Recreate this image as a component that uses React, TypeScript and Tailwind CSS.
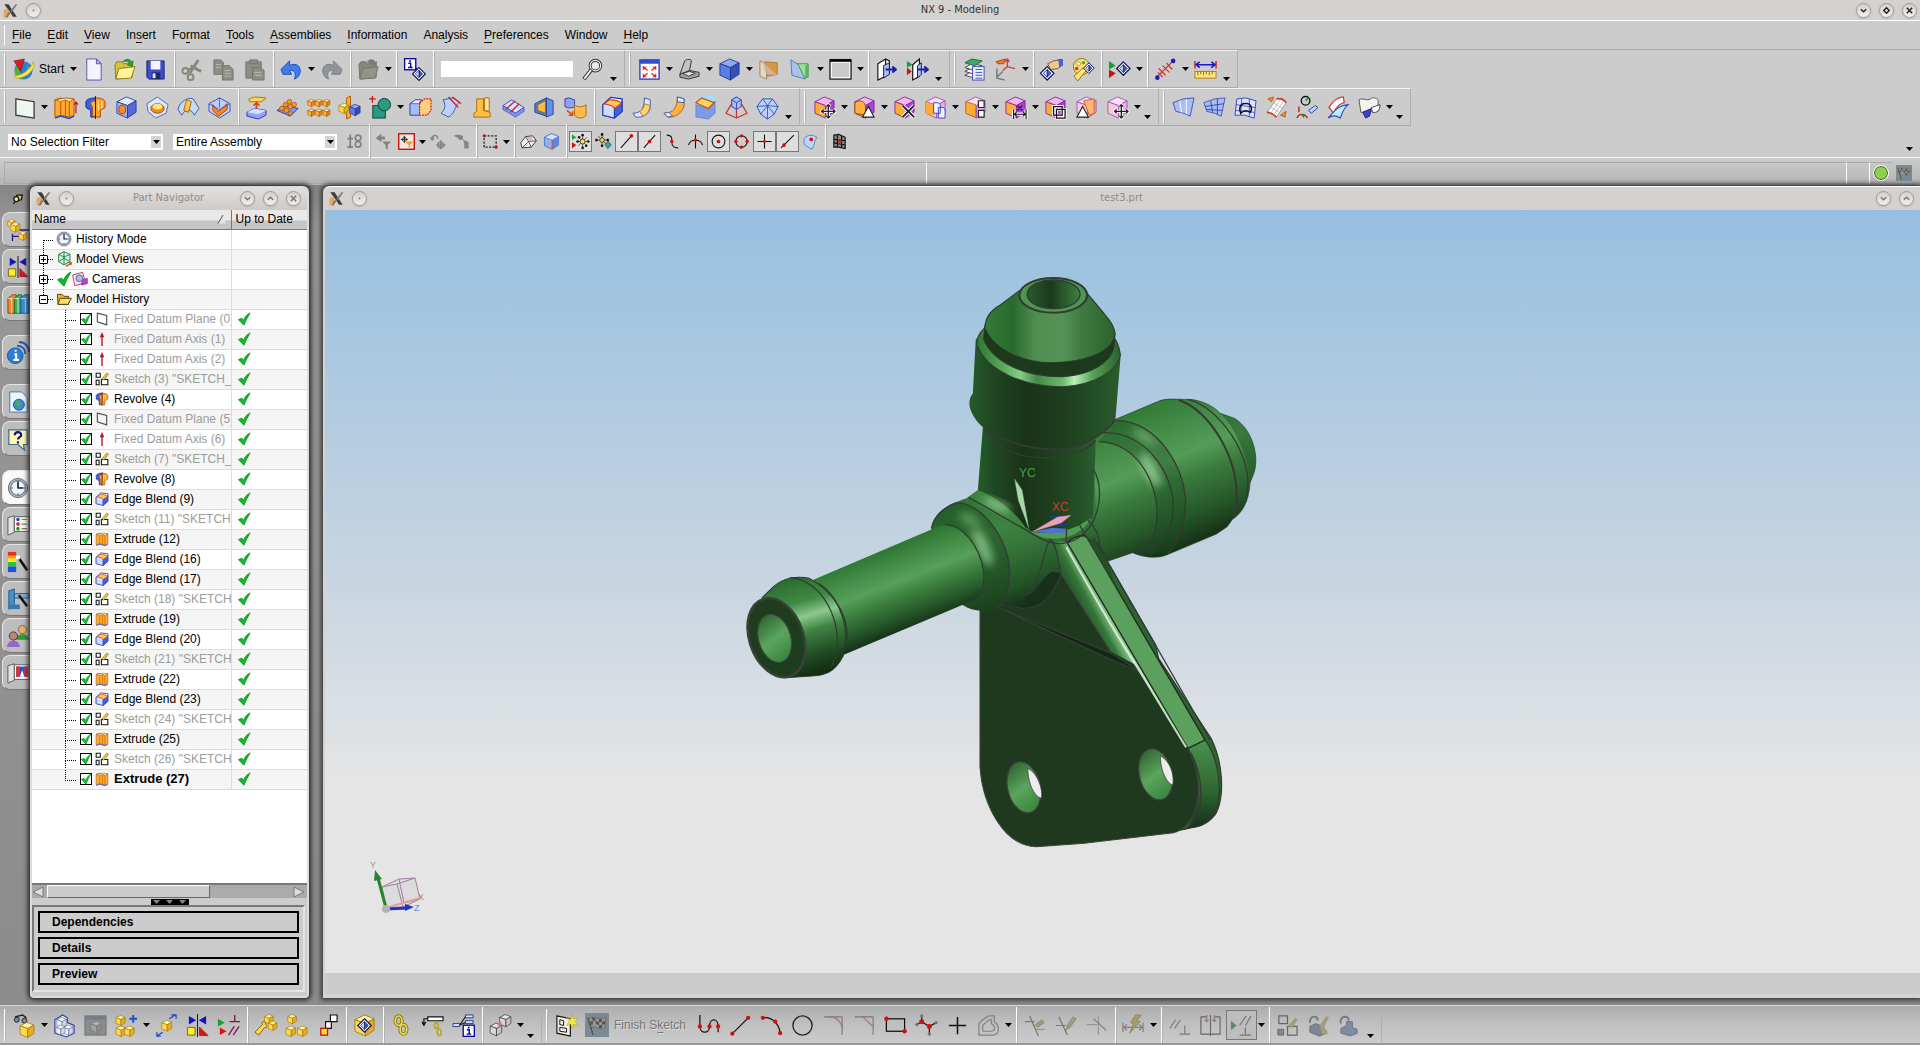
import React from "react";

type Node = React.ReactNode;

const PAL: Record<string, string[]> = {
  blue: ["#e3eaff", "#9fb2f6", "#5569d8", "#2a3a9c"],
  solid: ["#8fa8f4", "#5c7ce6", "#3450b8", "#22348c"],
  orange: ["#ffe7a8", "#ffb53c", "#e88512", "#a34f00"],
  yellow: ["#fff3a8", "#ffd84e", "#e5ac1c", "#9c7410"],
  mag: ["#f1b8ee", "#ffac33", "#a445d6", "#8a1fa0"],
  pink: ["#f8e0f8", "#f4ccd8", "#e0b0ea", "#a54bb8"],
  white: ["#ffffff", "#f1f3fa", "#d3d8ea", "#5a648c"],
  grey: ["#b3b3ad", "#a3a39c", "#8f8f88", "#78786f"],
  wire: ["#e6e6e6", "#d8d8d8", "#c4c4c4", "#333333"],
};

function Cube({ k = "blue", x = 0, y = 0, s = 1 }: { k?: string; x?: number; y?: number; s?: number }) {
  const p = PAL[k];
  return (
    <g transform={`translate(${x} ${y}) scale(${s})`} stroke={p[3]} strokeWidth={0.9 / Math.sqrt(s)} strokeLinejoin="round">
      <path d="M2 6 12 1 22 5 13 10Z" fill={p[0]} />
      <path d="M2 6 13 10V23L2 18Z" fill={p[1]} />
      <path d="M13 10 22 5V17L13 23Z" fill={p[2]} />
    </g>
  );
}

function L({ d, c = "#111", w = 1.2, f = "none" }: { d: string; c?: string; w?: number; f?: string }) {
  return <path d={d} stroke={c} strokeWidth={w} fill={f} strokeLinejoin="round" />;
}

function Dots({ at, c = "#d01010", r = 1.8 }: { at: number[][]; c?: string; r?: number }) {
  return <>{at.map(([x, y]) => <circle key={`${x}-${y}`} cx={x} cy={y} r={r} fill={c} />)}</>;
}

const arrows = "M16 9V23M9 16H23M14 11 16 9 18 11M14 21 16 23 18 21M11 14 9 16 11 18M21 14 23 16 21 18";
const moveMark = <><L d={arrows} c="#fff" w={3.4} /><L d={arrows} c="#222" w={1.4} /></>;
const mirror = (
  <>
    <path d="M3 2 10.500 6.500 3 11ZM21 2 13.500 6.500 21 11Z" fill="#1414b8" />
    <L d="M12 0V24" w={1} />
    <path d="M1.500 14H9.500V22H1.500Z" fill="#ffee2e" stroke="#7a6500" />
    <path d="M14 13.500V22.500H23Z" fill="#d81616" stroke="#7a0000" strokeWidth=".6" />
  </>
);
const diamond = (x: number, y: number) => (
  <g transform={`translate(${x} ${y})`}>
    <path d="M7 0 14 7 7 14 0 7Z" fill="#fff" stroke="#101060" strokeWidth="1.300" />
    <path d="M7 3 11 7 7 11Z" fill="#2e62c8" stroke="#101060" strokeWidth=".8" />
    <path d="M7 3 3 7 7 11Z" fill="#cfe0ff" stroke="#101060" strokeWidth=".8" />
  </g>
);
const infoBox = (x: number, y: number) => (
  <g transform={`translate(${x} ${y})`}>
    <rect x=".7" y=".7" width="11.600" height="11.600" fill="#fff" stroke="#0a0a96" strokeWidth="1.400" />
    <path d="M4.500 5.500H7V9.500M4.300 10H9" stroke="#0a0a96" strokeWidth="1.500" fill="none" />
    <rect x="5.500" y="2.300" width="1.900" height="1.700" fill="#0a0a96" />
  </g>
);
const extrude = (
  <>
    <path d="M2 4 8 2 13 4 22 3V20L17 22 8 20 2 22Z" fill="#ffab33" stroke="#a85500" />
    <path d="M2 4 8 6 13 4 17 6 22 3 13 2Z" fill="#ffe09a" stroke="#a85500" strokeWidth=".8" />
    <L d="M8 6V20M17 6V22M13 5V21" c="#c06400" w={1.2} />
    <L d="M2 23 8 21 17 23.500 22 21" c="#2b3fd0" w={1.4} />
  </>
);
const revolve = (
  <>
    <path d="M12 2C7 2 3 3 2 6V12L7 15V22H12Z" fill="#3d5fe0" stroke="#1b2f92" />
    <path d="M12 2C17 2 21 3 22 6V12L17 15V22H12Z" fill="#ff9d22" stroke="#a54a00" />
    <path d="M12 5C9 5 7 6 7 8L9 12V21H12Z" fill="#ffb040" stroke="#a54a00" strokeWidth=".8" />
    <L d="M12 0V24" w={1} c="#222" />
    <L d="M15 5V15M18.500 5V13" c="#ffe0a0" w={1.4} />
  </>
);
const blend = (
  <>
    <path d="M2 9 10 1.500 22 3 22 16 14 23 2 20Z" fill="#fff" stroke="#2336b8" strokeWidth="1.400" />
    <path d="M2 9C2 7 14 8 14 12V23L2 20Z" fill="#cfdcff" stroke="#2336b8" />
    <path d="M14 12 22 6V16L14 23Z" fill="#3f5fe4" stroke="#2336b8" />
    <path d="M3 8 9 4C15 4 20 5 21 8L14 13C12 9 6 9 3 8Z" fill="#ffc566" stroke="#d0400c" strokeWidth="1.200" />
  </>
);
const sketchMini = (
  <>
    <path d="M2 2H9V9H2ZM2 14H7V22H2ZM11 13H22V22H11Z" fill="#fff" stroke="#111" strokeWidth="1.800" />
    <path d="M12 12 20 2 23 4 15 14Z" fill="#ffc83c" stroke="#6a4800" />
  </>
);
const clock = (
  <>
    <circle cx="12" cy="12" r="10.500" fill="#aeb6c4" stroke="#5c6472" />
    <circle cx="12" cy="12" r="8" fill="#eef4fb" stroke="#5c6472" />
    <L d="M12 5V12H17.500" c="#15213a" w={1.8} />
    <Dots at={[[12, 5.5], [12, 18.5], [5.5, 12], [18.5, 12]]} c="#4f5a6a" r={0.9} />
  </>
);
const flag = (
  <>
    <rect x="0" y="0" width="24" height="24" fill="#7b8b95" />
    <path d="M3 6C8 2 14 8 21 4L20 15C14 18 11 12 6 15Z" fill="#97968e" stroke="#5a625e" strokeWidth=".7" />
    <path d="M7 4.500 10 5 10.500 8 7.500 7.500ZM14 6 17 6 17 9 14 9ZM10.500 8 14 9 14 12 11 11ZM17 9 20 8 20 11 17 12ZM5 9 7.500 7.500 8 11 6 12ZM14 12 17 12 17 15 14 15Z" fill="#55564e" />
    <L d="M3 5 8 22" c="#55564e" w={1.5} />
  </>
);

const ICONS: Record<string, Node> = {
  New: (<><path d="M5 1H15L20 6V23H5Z" fill="#f3f4ff" stroke="#5058b0" /><path d="M15 1V6H20Z" fill="#b8bdf0" stroke="#5058b0" /></>),
  Open: (<><path d="M2 7 4 4H9L11 6H20V20L3 22Z" fill="#d9c33a" stroke="#8b7a12" /><path d="M6 11 23 9 19 21 3 22Z" fill="#fff29a" stroke="#8b7a12" /><path d="M10 4C14 0 18 1 19 4L21 3 20 9 15 7 17 5C15 3 13 3 10 4Z" fill="#2fa02c" stroke="#156014" strokeWidth=".6" /></>),
  Save: (<><path d="M3 3H21V22H5L3 20Z" fill="#3c4ed0" stroke="#1a2478" /><rect x="7" y="3" width="10" height="9" fill="#f4f6ff" /><rect x="8" y="15" width="9" height="7" fill="#202a60" /><rect x="9" y="16" width="3" height="5" fill="#dfe4ff" /></>),
  Cut: (<g stroke="#86867e" fill="none" strokeWidth="2"><path d="M18 2 9 16M10 8 21 14" strokeWidth="3" /><circle cx="4.500" cy="13.500" r="3" /><circle cx="10" cy="20" r="3" /><path d="M7 12 16 10" /></g>),
  Copy: (<g fill="#8d8d86" stroke="#75756e"><path d="M2 2H9L12 5V17H2Z" /><path d="M11 8H18L22 12V23H11Z" /><path d="M13 13H19M13 16H20M13 19H20M4 7H9M4 10H9" stroke="#bdbdb8" /></g>),
  Paste: (<g fill="#8d8d86" stroke="#75756e"><path d="M3 4H19V21H3Z" /><path d="M7 2H15V6H7Z" /><path d="M10 10H18L22 13V23H10Z" /><path d="M12 15H19M12 18H20" stroke="#bdbdb8" /></g>),
  Undo: (<path d="M1 12 10 3V8C17 4 22 9 21 15 20 19 18 21 15 22 17 17 16 12 10 13L12 17 3 17Z" fill="#3d7df0" stroke="#1d4fb8" />),
  Redo: (<path d="M23 12 14 3V8C7 4 2 9 3 15 4 19 6 21 9 22 7 17 8 12 14 13L12 17 21 17Z" fill="#8f949a" stroke="#7a7f86" />),
  "Feature Clipboard": (<><path d="M2 7 4 4H9L11 6H20V20L3 22Z" fill="#86867a" stroke="#74746a" /><path d="M6 11 22 9 19 21 3 22Z" fill="#93938a" stroke="#74746a" /><path d="M10 4C14 0 18 1 19 4L21 3 20 9 15 7Z" fill="#7c7c72" /></>),
  "Object Information": (<>{infoBox(1, 0)}<path d="M14 10V15H11" stroke="#0a0a96" fill="none" /><g transform="translate(10 10) scale(.95)">{diamond(0, 0)}</g></>),
  "Command Finder": (<><circle cx="15" cy="8" r="5.500" fill="#e8eaee" stroke="#333" strokeWidth="3.200" /><circle cx="15" cy="8" r="5.500" fill="none" stroke="#f4f4f4" strokeWidth="1.200" /><L d="M11 12 3 22" c="#333" w={4} /><L d="M10.500 12.500 3.500 21.500" c="#fff" w={1.8} /></>),
  Fit: (<><rect x="2" y="2" width="20" height="20" fill="#fff" stroke="#2440b8" strokeWidth="1.400" /><path d="M2 2H22V6H2Z" fill="#2d4fd0" /><path d="M5 9H9L5 13ZM19 9H15L19 13ZM5 20H9L5 16ZM19 20H15L19 16Z" fill="#e02814" /><L d="M5 9 10 13M19 9 14 13M5 20 10 16M19 20 14 16" c="#e02814" w={1.4} /></>),
  "Edit Section": (<g stroke="#333" strokeWidth="1"><path d="M2 17 12 13 22 15 22 19 11 22 2 20Z" fill="#a3a3a3" /><path d="M2 17 7 3C9 1 14 1 14 3L12 13Z" fill="#c2c2c2" /><path d="M5 16 12 14 18 16 11 19Z" fill="#e4e4e4" /></g>),
  Shaded: <Cube k="solid" />,
  "Face Analysis": (<><path d="M2 3 9 6V22L2 19Z" fill="#e8d8be" stroke="#988668" /><path d="M7 4 20 5V17L10 19Z" fill="#dd9644" stroke="#b07a3a" /><path d="M4 3 20 18 8 17Z" fill="#c4c0ba" opacity=".7" /></>),
  "Clip Section": (<><path d="M2 2 10 7 17 22 3 18Z" fill="#a8c2ee" stroke="#5a78b8" /><path d="M9 6H20V20H16Z" fill="#a0dca0" stroke="#4a9a4a" /><path d="M17 8 20 6V20L17 22Z" fill="#54b854" /></>),
  Background: (<><rect x="1" y="2" width="22" height="20" fill="#fff" stroke="#222" strokeWidth="1.400" /><rect x="3" y="5" width="18" height="15" fill="#c9c9c9" /><rect x="1" y="1" width="22" height="3" fill="#050505" /></>),
  "Show and Hide": (<><path d="M3 6 11 1V19L3 23ZM11 1 15 3V17" fill="#fff" stroke="#111" strokeWidth="1.200" /><path d="M9 8 15 5V17L9 21Z" fill="#a8c0f0" stroke="#123" /><L d="M11 12H22M18 9 22 12 18 15" c="#1a1ac0" w={2} /></>),
  "Immediate Hide": (<><path d="M1 3 7 7 1 10Z" fill="#18a030" /><path d="M1 10 6 14 1 18Z" fill="#d01010" /><path d="M7 7 14 1V19L7 23Z" fill="#fff" stroke="#111" strokeWidth="1.200" /><path d="M12 8 16 5V17L12 21Z" fill="#a8c0f0" stroke="#123" /><L d="M12 12H23M19 9 23 12 19 15" c="#1a1ac0" w={2} /></>),
  "Layer Settings": (<><g fill="#f4f4f4" stroke="#444"><path d="M2 18 9 14 20 16 12 21Z" /><path d="M2 14 9 10 20 12 12 17Z" /><path d="M2 10 9 6 20 8 12 13Z" /></g><path d="M2 5 9 1 20 3 12 8Z" fill="#3fa86a" stroke="#1e6a40" /><rect x="10" y="9" width="12" height="14" fill="#eef1ff" stroke="#3a4ab8" /><L d="M13 12H20M13 15H20M13 18H20M13 21H20" c="#3a4ab8" w={1} /></>),
  "WCS Orient": (<><path d="M2 4 12 1 10 6 4 6Z" fill="#f07a28" stroke="#a44a08" /><L d="M14 2V9L22 11M14 9 9 13M12 4 14 1 16 4" c="#c84040" w={1.4} /><L d="M3 11V21L11 23M3 20 9 14" c="#777" w={1.5} /></>),
  "Feature Properties": (<><path d="M8 6 14 3 20 2 23 6 19 11 11 12Z" fill="#f0c890" stroke="#7a5a2a" /><path d="M19 1H24V8L20 10Z" fill="#4a5fd0" /><g transform="translate(0 9)">{diamond(0.5, 0)}</g></>),
  "Edit Display": (<><circle cx="11" cy="9" r="8.500" fill="#ffe466" stroke="#907010" /><circle cx="8" cy="6" r="2" fill="#fff" stroke="#7a6010" strokeWidth=".6" /><circle cx="13" cy="5" r="1.800" fill="#38b060" /><circle cx="6" cy="11" r="1.800" fill="#d03030" /><path d="M3 19 13 10 16 13 7 24Z" fill="#ffe27a" stroke="#907010" /><g transform="translate(13 5) scale(.8)">{diamond(0, 0)}</g></>),
  "Assign Feature": (<><path d="M1 3 8 8 1 12Z" fill="#18a030" /><path d="M1 12 8 16 1 21Z" fill="#d01010" /><g transform="translate(9 4)">{diamond(0, 0)}</g></>),
  "Simple Distance": (<><L d="M3 20 20 3M5 11 12 18M9 8 16 15M13 5 19 12M4 15 9 20" c="#d03030" w={1.3} /><Dots at={[[3.5, 20.5], [20, 3]]} c="#1a1ac8" r={2.4} /></>),
  "Measure Distance": (<><L d="M1 3V11M23 3V11" c="#d02020" w={1.5} /><L d="M2 7H22M6 4 2 7 6 10M18 4 22 7 18 10" c="#1a1ac8" w={1.6} /><rect x="1" y="14" width="22" height="7" fill="#ffe680" stroke="#a88410" /><L d="M4 14V18M7 14V17M10 14V18M13 14V17M16 14V18M19 14V17" c="#8a6a10" w={1} /></>),

  Sketch: <path d="M3 3 22 6V23L3 20Z" fill="#eef8f0" stroke="#333" strokeWidth="1.300" />,
  Extrude: <>{extrude}<L d="M24 7V18M22 9 24 6 26 9" c="#d01010" w={1.2} /></>,
  Revolve: revolve,
  Hole: (<><Cube /><ellipse cx="7.500" cy="14" rx="3.500" ry="4.500" fill="#ff8a1e" stroke="#b03a00" /></>),
  Emboss: (<><path d="M1 8 12 1 23 9 21 18 10 23 2 16Z" fill="#dbe7fd" stroke="#4a68c8" /><ellipse cx="12" cy="13" rx="7" ry="5" fill="#f28a18" stroke="#a45200" /><ellipse cx="12" cy="11" rx="5" ry="3" fill="#ffe08a" /></>),
  Rib: (<><path d="M1 14C3 5 12 1 17 3L23 13 18 20C16 14 9 12 5 20Z" fill="#c6daf4" stroke="#3a5aa8" /><path d="M10 4 15 6 12 17 7 15Z" fill="#ffc44a" stroke="#a46a10" /></>),
  Shell: (<><path d="M1 8 12 2 23 8V16L12 23 1 16Z" fill="#bcd0fa" stroke="#3050c0" /><path d="M5 9 11 16 20 8V14L11 21 5 15Z" fill="#ff8622" stroke="#b24400" /><L d="M12 2V12M1 8 12 14 23 8" c="#3050c0" w={0.8} /></>),
  Thicken: (<><path d="M4 3 10 1 22 2 17 6H5Z" fill="#ffd458" stroke="#a8760e" /><L d="M12 16V7M9 10 12 7 15 10" c="#e04a10" w={1.8} /><path d="M2 17 10 13 22 15V20L14 24 2 21Z" fill="#8ea4f4" stroke="#2a3fb0" /><path d="M2 17 10 13 22 15 14 19Z" fill="#d4deff" /></>),
  "Pattern Feature": (<><path d="M1 15 9 10 23 13 15 21Z" fill="#7d96f0" stroke="#2a3fb0" /><g fill="#f49a28" stroke="#a24c00" strokeWidth=".7"><circle cx="6" cy="13" r="2.400" /><circle cx="10" cy="9" r="2.400" /><circle cx="14" cy="6" r="2.400" /><circle cx="11" cy="15" r="2.400" /><circle cx="15" cy="11" r="2.400" /><circle cx="19" cy="9" r="2.400" /><circle cx="15" cy="18" r="2" /></g></>),
  "Pattern Geometry": (<>{[0, 8, 16].map((x) => [3, 13].map((y) => <Cube key={`${x}${y}`} k="orange" x={x} y={y} s={0.36} />))}</>),
  "Mirror Feature": (<><path d="M9 2 13 0V22L9 24Z" fill="#ffb030" stroke="#a85a00" /><Cube k="yellow" x={0} y={7} s={0.5} /><Cube k="solid" x={11} y={8} s={0.55} /></>),
  Unite: (<><rect x="4" y="10" width="13" height="13" fill="#2a9a86" stroke="#0b3f38" /><circle cx="16" cy="9" r="6.500" fill="#2a9a86" stroke="#0b3f38" /><L d="M0 3H7M3.500 0V7" c="#d01010" w={1.3} /></>),
  "Trim Body": (<><path d="M1 8 7 4H13L11 8V20H1Z" fill="#a9bcf8" stroke="#2a3fb0" /><path d="M1 8 7 4H13L10 8Z" fill="#e6edff" stroke="#2a3fb0" strokeWidth=".7" /><path d="M11 8 16 3H23V15L19 20H11Z" fill="#fbcf7c" stroke="#d02020" strokeWidth="1.300" strokeDasharray="2 1" /></>),
  "Split Body": (<><path d="M3 4 13 2 20 6C15 11 16 18 9 22L1 18C6 14 6 8 3 4Z" fill="#bcd0fa" stroke="#3a5aa8" /><L d="M9 1 19 12M13 1 22 8" c="#d02020" w={1.4} /></>),
  "Offset Region": (<><path d="M6 3H13V15L20 17V22H3V18L6 16Z" fill="#ffbf44" stroke="#b06a0a" /><path d="M14 2H19V16L14 15Z" fill="#ffe5a2" stroke="#b06a0a" /></>),
  "Trim Sheet": (<><path d="M1 10 10 4 23 12 14 18Z" fill="#d4deff" stroke="#3a50b8" /><path d="M1 10V14L14 22 23 16V12L14 18Z" fill="#8095ec" stroke="#3a50b8" strokeWidth=".8" /><L d="M4 14 14 5M9 17 18 8" c="#d02020" w={1.4} /></>),
  "Delete Body": (<><path d="M2 8 14 2V21L2 17Z" fill="#4878d4" stroke="#23459c" /><path d="M5 9 13 5V18L5 15Z" fill="#ffbd44" stroke="#a86a0a" /><path d="M14 2 21 5V19L14 22Z" fill="#6890e0" stroke="#23459c" /></>),
  "Scale Body": (<><path d="M1 3 5 2 11 4V11C8 13 4 13 1 11Z" fill="#8ea4f4" stroke="#2a3fb0" /><path d="M11 9C14 12 20 12 23 9V20C20 24 14 24 11 20Z" fill="#ffbb50" stroke="#b06a0a" /><L d="M3 15 9 20M9 16V20H5" c="#e04a10" w={1.6} /></>),

  "Edge Blend": blend,
  "Face Blend": (<><path d="M13 2 19 4V13C17 19 11 23 4 22L1 18C9 18 13 13 13 2Z" fill="#e2ecff" stroke="#3a5ac0" /><path d="M8 16C11 14 13 12 13 8L19 10C18 16 15 20 11 21Z" fill="#ffd27a" stroke="#c07a1a" /></>),
  "Soft Blend": (<><path d="M15 1 22 3V10C20 18 12 23 5 22L1 18C11 18 15 12 15 1Z" fill="#ffb23c" stroke="#b06208" /><path d="M15 1 22 3V7L15 6ZM1 18 5 22 10 21 6 17Z" fill="#e2ecff" stroke="#3a5ac0" /></>),
  Chamfer: (<><path d="M8 0H23V20H2V9Z" fill="#a8dcf4" /><path d="M2 9 14 13 22 5V18L15 24 2 22Z" fill="#7f9be8" stroke="#506ac0" strokeWidth=".6" /><path d="M2 7 8 2 21 7 15 13Z" fill="#ffd65c" stroke="#c04a10" strokeWidth="1.200" /></>),
  Draft: (<><path d="M7 4 12 1 17 4V11L12 14 7 11Z" fill="#a9bcf8" stroke="#2a3fb0" /><L d="M7 8 1 18 12 23 23 18 17 8M12 14V23" c="#c83420" w={1.3} /><L d="M7 4 12 7 17 4M12 7V14" c="#2a3fb0" w={0.9} /></>),
  "Facet Body": (<><path d="M7 3 17 3 23 11 19 19 12 24 5 19 1 11Z" fill="#bdd0fb" stroke="#3050b0" /><L d="M7 3 12 10 17 3M1 11 12 10 23 11M12 10V24M5 19 12 10 19 19" c="#3050b0" w={0.9} /></>),

  "Move Face": <><Cube k="mag" />{moveMark}</>,
  "Pull Face": (<><Cube k="mag" /><path d="M2 7C8 3 13 6 13 12V20L2 18Z" fill="#ffb33a" stroke="#9a5200" /><path d="M16 11 22 22H10Z" fill="#fff" stroke="#222" strokeWidth="1.200" /></>),
  "Delete Face": <><Cube k="mag" /><L d="M10 10 22 22M22 10 10 22" c="#fff" w={4} /><L d="M10 10 22 22M22 10 10 22" c="#222" w={2} /></>,
  "Copy Face": <><Cube k="pink" /><path d="M2 6 10 9V21L2 18Z" fill="#ffac33" /><path d="M10 7H15L17 9V18H10ZM15 12H20L22 14V23H15Z" fill="#eef1ff" stroke="#3a4ab8" /></>,
  "Group Face": <><Cube k="pink" /><path d="M2 6 12 9V22L2 18Z" fill="#ffac33" stroke="#c06c00" strokeWidth=".7" /><path d="M15 5H21V12H15ZM15 15H21V22H15Z" fill="#fff" stroke="#222" strokeWidth="1.200" /></>,
  "Linear Dimension": <><Cube k="mag" /><path d="M10 14V24M23 14V24M11 19H22" stroke="#fff" strokeWidth="3.400" /><L d="M10 14V24M23 14V24M11 19H22M13 17 11 19 13 21M20 17 22 19 20 21M14 10 19 15M19 10 14 15" c="#111" w={1.2} /></>,
  "Make Coplanar": <><Cube k="mag" /><path d="M10 11H19V20H10ZM13 14H22V23H13Z" fill="none" stroke="#fff" strokeWidth="3" /><path d="M10 11H19V20H10ZM13 14H22V23H13Z" fill="none" stroke="#111" strokeWidth="1.300" /></>,
  "Offset Face": <><Cube k="pink" /><path d="M9 5 20 3V18L15 20Z" fill="#ffb870" stroke="#d06020" /><path d="M8 11 14 22H2Z" fill="#fff" stroke="#222" strokeWidth="1.200" /></>,
  "Resize Face": <><Cube k="pink" />{moveMark}</>,

  Ruled: (<><path d="M1 7 12 3 23 2 19 21 12 18 4 16Z" fill="#a9bcf4" stroke="#4058c0" /><L d="M8 5 10 17M15 3 15 19" c="#e8eeff" w={1.4} /></>),
  "Through Curves": (<><path d="M1 7 12 3 23 2 19 21 12 18 4 16Z" fill="#a9bcf4" stroke="#4058c0" /><L d="M8 5 10 17M15 3 15 19M2 11 22 8M3 14 20 15" c="#3048b8" w={1} /></>),
  "Curve Mesh": (<><path d="M3 3 12 2 23 5 21 23 11 20 1 20Z" fill="#dbe3ff" stroke="#3048c8" /><L d="M8 3 7 20M16 3 16 22M2 9 22 12M1 15 21 17" c="#3048c8" w={0.9} /><path d="M7 18C4 10 9 7 12 8 17 7 20 12 17 17 14 15 11 14 7 18Z" fill="none" stroke="#111" strokeWidth="1.500" /></>),
  Swept: (<><path d="M12 3C17 2 20 4 22 7L12 22C9 19 6 17 2 17Z" fill="#fff" stroke="#999" /><L d="M12 3C17 2 20 4 22 7M2 17C6 17 9 19 12 22" c="#d83818" w={1.8} /><L d="M9 7 18 13M6 12 15 17M16 4 6 18M19 6 9 20" c="#b0b0b0" w={0.8} /><path d="M3 3 9 1 7 6ZM16 20 22 16 21 22Z" fill="#f08a28" stroke="#a44a08" strokeWidth=".7" /></>),
  "Section Surface": (<><circle cx="10" cy="5" r="4.500" fill="none" stroke="#111" strokeWidth="1.400" /><L d="M10 5 13 2" c="#18a030" w={1.6} /><path d="M13 15 20 10 23 12 16 18Z" fill="#c8d0ff" stroke="#2a3fb0" /><L d="M1 23C3 18 9 18 12 23M3 11V17" c="#d01010" w={1.4} /><path d="M5 19 10 19 8 23Z" fill="#159030" /></>),
  "Offset Surface": (<><path d="M2 12C6 7 8 2 17 1L18 7C12 8 9 13 7 18Z" fill="#fff" stroke="#d83838" strokeWidth="1.300" /><path d="M1 23C6 19 9 10 22 9 17 13 16 17 14 23 9 20 6 20 1 23Z" fill="#bfeaf6" stroke="#2a4fc0" strokeWidth="1.200" /></>),
  "Sheets to Solid": (<><path d="M1 4C5 1 9 6 13 3 16 1 19 2 21 4V16C17 13 14 17 11 16 8 15 5 18 3 17Z" fill="#f4f4ee" stroke="#555" /><path d="M5 17 14 13 12 21 8 23Z" fill="#3a44c8" stroke="#1a2080" /><path d="M14 12 23 9C23 15 20 18 15 17Z" fill="#fff" stroke="#444" /></>),

  "Reset Filter": <g stroke="#808078" strokeWidth="2.400" fill="none"><path d="M6 2V20M2 8H10M2 20H10" /><circle cx="17" cy="7" r="4" /><circle cx="17" cy="16" r="4" /></g>,
  "Allow Highlight": <g fill="#84847c"><path d="M1 7 9 1V5H14V9H9V13Z" /><path d="M10 12H23L18 17V24L15 21V17Z" /></g>,
  "Type Filter": <><rect x="1" y="1" width="22" height="22" fill="#ece8e4" stroke="#d01010" strokeWidth="2" /><L d="M9 4V14M4 9H14" c="#222" w={1.4} /><circle cx="9" cy="9" r="3" fill="none" stroke="#222" /><path d="M10 12H22L17 17V22L15 20V17Z" fill="#ff9c1e" /></>,
  "Up One Level": <g stroke="#84847c" strokeWidth="2" fill="none"><path d="M3 9C3 2 11 2 11 8M1 6 3 10 6 7" /><path d="M15 10V23M9 17H22" /><circle cx="15" cy="17" r="4" /></g>,
  "Deselect All": <g fill="#84847c"><path d="M1 4 6 2 14 4 14 9 9 10 7 7Z" /><path d="M14 9 22 13V22H16V15Z" /></g>,
  Rectangle: <><rect x="3" y="4" width="17" height="16" fill="none" stroke="#222" strokeWidth="1.800" strokeDasharray="3 2" /><Dots at={[[3, 4], [20, 20]]} r={2.2} /></>,
  "Highlight Faces": <><path d="M1 14 8 5 18 4 23 11 16 20 3 21Z" fill="#e8eefc" stroke="#333" strokeWidth="1.300" /><L d="M8 5 12 12 3 21M12 12 23 11M12 12 16 20" c="#333" w={1.1} /><path d="M10 6 17 5 18 10 13 11Z" fill="#f0b0b0" /></>,
  "Highlight Hidden": <><path d="M2 6 12 1 22 5V17L13 23 2 18Z" fill="#8db4f0" stroke="#3a5ab8" /><path d="M2 6 12 1 22 5 13 10Z" fill="#d4e6ff" stroke="#3a5ab8" strokeWidth=".8" /><path d="M13 10 22 5V17L13 23Z" fill="#5a86dc" /><L d="M13 10V23" c="#e04040" w={1.4} /></>,
  "Snap Points": <><path d="M0 2 6 6 0 10Z" fill="#18a030" /><path d="M0 13 6 17 0 22Z" fill="#d01010" /><L d="M15 3V21M6 12H24M9 6 21 18M21 6 9 18" c="#333" w={1} /><circle cx="15" cy="12" r="3.500" fill="#ffe040" stroke="#111" /><Dots at={[[15, 3], [15, 21], [8, 12], [23, 12], [10, 6], [20, 18]]} c="#111" r={1.8} /></>,
  "Clear Snap": <><L d="M10 2V18M2 10H18M4 4 16 16" c="#333" w={1} /><circle cx="10" cy="10" r="3.200" fill="#ffe040" stroke="#111" /><Dots at={[[10, 2], [10, 18], [2, 10], [18, 10]]} c="#111" r={1.9} /><path d="M14 16 19 12 23 17 18 22Z" fill="#3aa0a8" stroke="#14545a" /></>,
  "End Point": <><L d="M4 21 19 4" w={1.5} /><Dots at={[[19, 4]]} r={2.6} /></>,
  "Mid Point": <><L d="M4 21 20 3" w={1.5} /><Dots at={[[12, 12]]} r={2.6} /></>,
  "Control Point": <><L d="M4 3C12 3 11 8 11 12 11 17 12 21 20 21" w={1.5} /><Dots at={[[11, 12]]} r={2.4} /></>,
  Intersection: <><L d="M12 2V22M2 17C5 8 19 8 22 17" w={1.5} /><Dots at={[[12, 10]]} r={2.4} /></>,
  "Arc Center": <><circle cx="12" cy="12" r="9" fill="none" stroke="#111" strokeWidth="1.500" /><Dots at={[[12, 12]]} r={2.6} /></>,
  "Quadrant Point": <><circle cx="12" cy="12" r="8" fill="none" stroke="#111" strokeWidth="1.500" /><Dots at={[[12, 4], [12, 20], [4, 12], [20, 12]]} r={2.4} /></>,
  "Existing Point": <><L d="M12 2V22M2 12H22" w={1.5} /><Dots at={[[12, 12]]} r={2.2} /></>,
  "Point on Curve": <><L d="M3 21 21 3" w={1.5} /><Dots at={[[7, 17]]} r={2.6} /></>,
  "Point on Face": <><path d="M3 8C8 2 15 2 21 6 17 11 18 17 14 23 9 20 5 18 3 16Z" fill="#bcd6f8" stroke="#3a6ab8" /><Dots at={[[13, 9]]} r={2.6} /></>,
  "Bounded Grid": <><path d="M4 3 11 2 20 6V22L11 20 4 20Z" fill="#8b8b8b" stroke="#111" strokeWidth="1.600" /><L d="M9 3V20M15 4V21M4 9 20 11M4 14 20 17" w={1.6} /><path d="M10 10H15V16H10Z" fill="#c02020" opacity=".7" /></>,

  "Find Component": <><g stroke="#222" fill="#7889a8"><circle cx="4" cy="6" r="2.600" /><circle cx="12" cy="7" r="2.600" /><path d="M2 3 10 1 14 4" fill="none" strokeWidth="1.600" /></g><Cube k="yellow" x={6} y={8} s={0.72} /></>,
  "Work Part": <><path d="M2 6 10 1 15 4V9L22 12V20L14 24 2 20Z" fill="#ecf0fb" stroke="#3040a0" strokeWidth="1.200" /><Cube k="white" x={3} y={3} s={0.5} /><Cube k="white" x={10} y={11} s={0.5} /><Cube k="white" x={2} y={11} s={0.48} /></>,
  "Displayed Part": <><rect x="1" y="2" width="22" height="20" fill="#888d92" stroke="#6c7176" /><path d="M1 2H23V6H1Z" fill="#777c88" /><Cube k="grey" x={6} y={7} s={0.55} /></>,
  "Add Component": <><Cube k="yellow" x={0} y={1} s={0.48} /><Cube k="yellow" x={0} y={12} s={0.5} /><Cube k="yellow" x={9} y={12} s={0.5} /><L d="M19 1V9M15 5H23" c="#1450e0" w={2} /></>,
  "Move Component": <><Cube k="yellow" x={6} y={6} s={0.52} /><L d="M15 5 21 1M17 1H22V5M8 19 2 23M2 19V23H6" c="#2040c8" w={1.3} /></>,
  "Mirror Assembly": mirror,
  "Assembly Constraints": <><path d="M1 5 8 9 1 13Z" fill="#18a030" /><path d="M3 14 10 18 3 22Z" fill="#e01010" /><L d="M13 8H24M18.500 1V8M12 22 18 13M17 22 23 13" c="#801850" w={1.4} /></>,
  "Suppress Component": <><Cube k="yellow" x={10} y={0} s={0.45} /><Cube k="yellow" x={14} y={7} s={0.45} /><path d="M1 19 9 11C7 7 13 7 12 11 15 12 13 15 11 14L5 22Z" fill="#ffd84e" stroke="#80600c" /></>,
  "Exploded Views": <><Cube k="yellow" x={2} y={0} s={0.45} /><Cube k="yellow" x={0} y={12} s={0.5} /><Cube k="yellow" x={12} y={12} s={0.5} /></>,
  "Sequence": <><path d="M15 1H22V8H15ZM10 8H16V15H10Z" fill="#fff" stroke="#111" strokeWidth="1.200" /><rect x="5" y="15" width="7" height="7" fill="#ffee2e" stroke="#d01010" strokeWidth="1.400" /></>,
  "Product Interface": <><Cube k="yellow" /><g transform="translate(5 5)">{diamond(0, 0)}</g></>,
  "WAVE Linker": <g fill="none" stroke="#8a7a10" strokeWidth="3.600"><ellipse cx="9" cy="7" rx="3.500" ry="5" /><ellipse cx="14" cy="16" rx="3.500" ry="5" /><g stroke="#f0e060" strokeWidth="1.600"><ellipse cx="9" cy="7" rx="3.500" ry="5" /><ellipse cx="14" cy="16" rx="3.500" ry="5" /></g></g>,
  "WAVE Browser": <><path d="M7 3H23V7H7Z" fill="#fff" stroke="#111" strokeWidth="1.200" /><L d="M7 5H3V11M1 8 3 12 5 8" /><g fill="none" stroke="#b8a828" strokeWidth="1.800"><ellipse cx="16" cy="12" rx="2" ry="3" /><ellipse cx="19" cy="19" rx="2" ry="3.500" /></g></>,
  "Assembly Info": <><path d="M14 1H22V4H14ZM14 7H22V10H14ZM1 10H8V13H1Z" fill="#dfe6ff" stroke="#2a3a8a" /><L d="M8 11.500 14 3M8 11.500 14 9" c="#222" w={1.2} />{infoBox(11, 11)}</>,
  "Check Clearances": <><Cube k="wire" x={10} y={0} s={0.58} /><Cube k="wire" x={0} y={9} s={0.6} /><path d="M9 9 13 8 13 12 10 14Z" fill="#d87878" /></>,

  "Sketch in Task": <><path d="M2 2 16 5V23L2 20Z" fill="#f0f0e4" stroke="#111" strokeWidth="1.200" /><path d="M5 6 9 7V12L5 11ZM5 14 12 15V19L5 18Z" fill="none" stroke="#111" /><path d="M18 1 19.500 5.500 24 4 21 8 24 12 19.500 10.500 18 15 16.500 10.500 12 12 15 8 12 4 16.500 5.500Z" fill="#f4ec3a" stroke="#a89c10" strokeWidth=".5" /></>,
  "Finish Flag": flag,
  Profile: <><L d="M2 1V13C2 21 12 21 12 13 12 4 21 4 21 13V19" w={1.3} /><Dots at={[[2, 13], [12, 13], [21, 13]]} r={2.2} /></>,
  Line: <><L d="M3 21 20 4" w={1.3} /><Dots at={[[3.5, 20.5], [20, 4]]} r={2.2} /></>,
  Arc: <><L d="M3 4C12 2 20 10 21 20" w={1.3} /><Dots at={[[3, 4], [16, 8], [21, 20]]} r={2.2} /></>,
  Circle: <circle cx="12" cy="12" r="10" fill="none" stroke="#222" strokeWidth="1.400" />,
  Fillet: <><L d="M2 3H21V22" c="#777" w={1.1} /><L d="M8 3C15 3 21 9 21 15" c="#a07878" w={1.3} /></>,
  "Sketch Chamfer": <><L d="M2 3H21V22" c="#777" w={1.1} /><L d="M10 3 21 13" c="#a07878" w={1.3} /></>,
  "Sketch Rectangle": <><rect x="2.500" y="5" width="19" height="13" fill="none" stroke="#111" strokeWidth="1.300" /><Dots at={[[2.5, 5], [21.5, 18]]} r={2.3} /></>,
  "Studio Spline": <><L d="M2 11 7 8 15 13 22 9M7 8V2M15 13V21" w={1.3} /><Dots at={[[7, 8], [15, 13]]} r={2.6} /><Dots at={[[7, 2], [2, 11], [22, 9], [15, 21]]} c="#777" r={1.8} /></>,
  Point: <L d="M12 3V21M3 12H21" w={1.6} />,
  "Offset Curve": <g fill="none" stroke="#877f82" strokeWidth="1.300"><path d="M6 6 12 2H18V8C24 12 24 22 16 22H2V10Z" /><path d="M9 9 13 6H15V10C20 13 19 18 15 18H6V12Z" /></g>,
  "Quick Trim": <><L d="M2 8H12M7 2 16 23" c="#777" w={1.3} /><L d="M14 16H23" c="#888" w={1} /><path d="M13 11 20 6 22 9 15 14Z" fill="#a39c7c" stroke="#7f7a64" strokeWidth=".7" /></>,
  "Quick Extend": <><L d="M2 12H12M5 3 14 22M12 17 22 5" c="#777" w={1.3} /><path d="M13 13 20 3 23 5 16 15Z" fill="#a39c7c" stroke="#7f7a64" strokeWidth=".7" /></>,
  "Make Corner": <><L d="M2 11H13M14 2V22" c="#999" w={1.3} /><L d="M9 5 22 17" c="#a07878" w={1.3} /></>,
  "Rapid Dimension": <><L d="M1 9V19M22 9V19M2 14H21M5 11 2 14 5 17M18 11 21 14 18 17" c="#8d7a7a" w={1.3} /><path d="M14 1 20 1 16 7 19 8 8 20 12 10 9 9Z" fill="#a59c6a" stroke="#80794e" strokeWidth=".7" /></>,
  "Geometric Constraints": <L d="M2 15 8 6M7 15 13 6M12 21H23M17.500 12V21" c="#777" w={1.2} />,
  "Make Symmetric": <><L d="M8 3H2V21H22V3H16M12 1V23" c="#666" w={1.2} /><L d="M8 1V8M16 1V8M6 6 8 8 10 6M14 6 16 8 18 6" c="#8d7a7a" w={1.2} /></>,
  "Display Constraints": <><path d="M1 7 7 12 1 17Z" fill="#5e8a68" /><L d="M10 12 17 2M16 12 22 2M10 22H22M16 14V22" c="#777" w={1.3} /></>,
  "Auto Constrain": <><path d="M3 2H12V10H3ZM12 13H22V22H12Z" fill="none" stroke="#666" strokeWidth="1.300" /><path d="M2 16H8V22H2Z" fill="#888" stroke="#666" /><path d="M13 12 20 4 23 6 16 15Z" fill="#a39c7c" /></>,
  "Attach Dimension": <><path d="M3 9C3 1 12 1 11 7" fill="none" stroke="#707a84" strokeWidth="2" /><path d="M3 13 9 10 14 12V15L20 17V20L13 23 3 19Z" fill="#7c8694" stroke="#646e7a" /><path d="M13 12 20 2 23 4 18 13 22 21H16Z" fill="#a39c7c" /></>,
  "Convert Reference": <><path d="M3 10C1 1 12 1 11 7" fill="none" stroke="#707a84" strokeWidth="2" /><path d="M3 15 9 12 9 8H15V14L20 16V20L13 23 3 20Z" fill="#7f8ca0" stroke="#68748a" /></>,
};

const TREE_ICONS: Record<string, Node> = {
  plane: <path d="M4 2 20 6V22L4 17Z" fill="none" stroke="#4a5a50" strokeWidth="2" />,
  axis: <><L d="M12 24V6" c="#c01818" w={2.4} /><path d="M12 0 16 9H8Z" fill="#c01818" /></>,
  sketch: sketchMini,
  revolve,
  blend,
  extrude,
};

const check = <path d="M3 13 8 11 11 15C13 10 17 5 22 2 18 8 15 14 12 22Z" fill="#16c032" stroke="#12a42c" strokeWidth="2" strokeLinejoin="round" />;

function Svg({ children, className = "size-6" }: { children: Node; className?: string }) {
  return <svg viewBox="0 0 24 24" className={`shrink-0 overflow-visible ${className}`} fill="none" aria-hidden="true">{children}</svg>;
}

function Caret() {
  return <svg viewBox="0 0 7 4" className="h-1 w-[7px]" aria-hidden="true"><path d="M0 0H7L3.500 4Z" fill="#000" /></svg>;
}

function Grip() {
  return <span className="mr-[3px] ml-1 h-8 w-0.5 self-center border-l border-white bg-[#b4b4b4]" />;
}

function Sep() {
  return <span className="mr-px ml-[3px] h-9 w-0.5 self-center border-l border-white bg-[#b0b0b0]" />;
}

function Tools({ items, small = false }: { items: string[]; small?: boolean }) {
  return (
    <>
      {items.map((it, i) => {
        if (it === "|") return <Sep key={i} />;
        if (it === "v") return <button key={i} type="button" aria-label={`${items[i - 1]} options`} className="flex w-[9px] items-center justify-center"><Caret /></button>;
        const on = it[0] === "*";
        const name = on ? it.slice(1) : it;
        const size = small ? "w-[23px]" : "w-[31px]";
        const look = on ? (small ? "my-[5px] border border-[#777] bg-[#dedede]" : "my-1 border border-[#777] bg-[#bdbdbd]") : "";
        return (
          <button key={i} type="button" title={name} aria-label={name} className={`flex shrink-0 items-center justify-center ${size} ${look}`}>
            <Svg className={small ? "size-[17px]" : "size-[23px]"}>{ICONS[name]}</Svg>
          </button>
        );
      })}
    </>
  );
}

function Group({ children, className = "" }: { children: Node; className?: string }) {
  return (
    <div role="toolbar" className={`flex h-[38px] shrink-0 border-t border-r border-b border-t-white/80 border-r-[#b0b0b0] border-b-[#aaa] ${className}`}>
      <Grip />
      {children}
      <button type="button" aria-label="Toolbar options" className="mr-1.5 ml-px flex w-[9px] items-end justify-center pb-1.5"><Caret /></button>
    </div>
  );
}

function RoundButton({ label, d, dim = false }: { label: string; d?: string; dim?: boolean }) {
  return (
    <button type="button" aria-label={label} className="flex size-[15px] items-center justify-center rounded-full border border-[#9d9a97] bg-linear-to-b from-[#d2d0ce] to-[#f2f1f0] shadow-sm">
      <svg viewBox="0 0 10 10" className="size-[9px]" fill="none" stroke={dim ? "#777" : "#222"} strokeWidth="1.600" aria-hidden="true">
        {d ? <path d={d} /> : <circle cx="5" cy="5" r=".6" fill="#777" stroke="#777" strokeWidth="1" />}
      </svg>
    </button>
  );
}
const DOWN = "M2 3.500 5 6.500 8 3.500";
const UP = "M2 6.500 5 3.500 8 6.500";
const CLOSE = "M2 2 8 8M8 2 2 8";

function Logo() {
  return (
    <Svg className="size-[15px]">
      <path d="M2 2H9L14 10 22 22H16L11 14Z" fill="#3c3c3a" />
      <path d="M20 2 12 12 14 15 23 2Z" fill="#7b7b76" />
      <path d="M1 12 6 9 10 14 5 23H1Z" fill="#e0a868" />
      <path d="M9 14 12 16 7 23H4Z" fill="#96714a" />
    </Svg>
  );
}

const MENUS: [string, number][] = [
  ["File", 0], ["Edit", 0], ["View", 0], ["Insert", 2], ["Format", 2], ["Tools", 0], ["Assemblies", 0],
  ["Information", 0], ["Analysis", 3], ["Preferences", 0], ["Window", 4], ["Help", 0],
];

function Mnemonic({ text, at }: { text: string; at: number }) {
  return <>{text.slice(0, at)}<span className="underline underline-offset-[3px]">{text[at]}</span>{text.slice(at + 1)}</>;
}

const FEATURES: [string, string][] = [
  ["Fixed Datum Plane (0)", "plane"], ["Fixed Datum Axis (1)", "axis"], ["Fixed Datum Axis (2)", "axis"],
  ['Sketch (3) "SKETCH_000"', "sketch"], ["Revolve (4)", "revolve"], ["Fixed Datum Plane (5)", "plane"],
  ["Fixed Datum Axis (6)", "axis"], ['Sketch (7) "SKETCH_001"', "sketch"], ["Revolve (8)", "revolve"],
  ["Edge Blend (9)", "blend"], ['Sketch (11) "SKETCH_002"', "sketch"], ["Extrude (12)", "extrude"],
  ["Edge Blend (16)", "blend"], ["Edge Blend (17)", "blend"], ['Sketch (18) "SKETCH_003"', "sketch"],
  ["Extrude (19)", "extrude"], ["Edge Blend (20)", "blend"], ['Sketch (21) "SKETCH_004"', "sketch"],
  ["Extrude (22)", "extrude"], ["Edge Blend (23)", "blend"], ['Sketch (24) "SKETCH_005"', "sketch"],
  ["Extrude (25)", "extrude"], ['Sketch (26) "SKETCH_006"', "sketch"], ["Extrude (27)", "extrude"],
];

const modelViews = <g stroke="#1f8a50" strokeWidth="1.500"><path d="M4 5 12 1 21 5V16L12 21 4 16Z" fill="#d8f0e0" /><path d="M4 5 12 9 21 5M12 9V21M4 16 12 11 21 16M12 1V11" /><path d="M15 23 23 18M20 17 23 18 22 21" stroke="#e04020" strokeWidth="2" /></g>;
const camera = <><path d="M1 6 16 2 20 18 4 22Z" fill="#fbe4ec" stroke="#c04868" strokeWidth="1.500" /><circle cx="11" cy="11" r="5" fill="#a9c0ee" stroke="#4458b0" strokeWidth="1.300" /><path d="M16 13 23 11V19L14 21Z" fill="#c43ad0" stroke="#80209a" /></>;
const folder = <><path d="M2 5H9L12 8H19V20H3Z" fill="#f0b428" stroke="#4a3400" strokeWidth="1.300" /><path d="M6 11H23L18 20H3Z" fill="#ffdc70" stroke="#4a3400" strokeWidth="1.300" /></>;

function Row({ i, children, done }: { i: number; children: Node; done?: boolean }) {
  return (
    <tr className={i % 2 ? "bg-[#f5f5f5]" : "bg-white"}>
      <td className="h-5 overflow-hidden border-r border-b border-[#dcdcdc] p-0">
        <div className="flex h-[19px] items-center whitespace-nowrap">{children}</div>
      </td>
      <td className="border-b border-[#dcdcdc] p-0 pl-[5px]">{done && <Svg className="size-[14px]">{check}</Svg>}</td>
    </tr>
  );
}

function Expander({ sign, last = false, label }: { sign: string; last?: boolean; label: string }) {
  return (
    <>
      <span className="ml-[7px] flex h-[19px] w-[9px] flex-col items-center">
        <span className="w-0 flex-1 border-l border-dotted border-black" />
        <button type="button" aria-label={`${label} ${sign === "+" ? "expand" : "collapse"}`} className="size-[9px] rounded-[1px] border border-black bg-white">
          <svg viewBox="0 0 7 7" className="size-[7px]" stroke="#000" aria-hidden="true"><path d={sign === "+" ? "M1 3.500H6M3.500 1V6" : "M1 3.500H6"} /></svg>
        </button>
        <span className={`w-0 flex-1 border-l border-dotted ${last ? "border-transparent" : "border-black"}`} />
      </span>
      <span className="mr-[3px] w-[5px] border-b border-dotted border-black" />
    </>
  );
}

function Navigator() {
  return (
    <section className="flex w-[279px] shrink-0 flex-col rounded-t-md rounded-b border-2 border-t border-[#dedbd8] bg-[#ccc] shadow-[0_0_5px_2px_#222]">
      <header className="flex h-[23px] shrink-0 items-center rounded-t-md bg-linear-to-b from-[#e2e0de] to-[#cecac7] pr-1.5 pl-1">
        <div className="flex flex-1 items-center gap-2"><Logo /><RoundButton label="Menu" dim /></div>
        <h2 className="font-['DejaVu_Sans_Condensed','DejaVu_Sans',sans-serif] text-[11px] text-[#8f8c89]">Part Navigator</h2>
        <div className="flex flex-1 justify-end gap-2"><RoundButton label="Minimize" d={DOWN} dim /><RoundButton label="Maximize" d={UP} dim /><RoundButton label="Close" d={CLOSE} dim /></div>
      </header>
      <div className="min-h-0 flex-1 overflow-hidden bg-white">
        <table className="w-full table-fixed border-collapse">
          <colgroup><col className="w-[199px]" /><col /></colgroup>
          <thead>
            <tr className="bg-linear-to-b from-[#eae9e8] from-50% to-[#c6c6c6] to-60% text-left">
              <th className="h-[19px] border-r border-b border-[#777] p-0 pl-0.5 font-normal">
                <div className="flex items-center justify-between pr-1">Name<svg viewBox="0 0 10 10" className="size-[10px]" aria-hidden="true"><path d="M1 9.500H9L6 1Z" fill="#e4e4e4" /><path d="M1 9.500 6 1" stroke="#555" /></svg></div>
              </th>
              <th className="border-b border-[#777] p-0 pl-1 font-normal">Up to Date</th>
            </tr>
          </thead>
          <tbody>
            <Row i={0}>
              <span className="mr-[3px] ml-[11px] flex h-[19px] w-[10px] flex-col">
                <span className="h-[10px]" />
                <span className="flex-1 border-t border-l border-dotted border-black" />
              </span>
              <Svg className="size-4">{clock}</Svg><span className="ml-1">History Mode</span>
            </Row>
            <Row i={1}><Expander sign="+" label="Model Views" /><Svg className="size-4">{modelViews}</Svg><span className="ml-1">Model Views</span></Row>
            <Row i={2}><Expander sign="+" label="Cameras" /><Svg className="size-4">{check}</Svg><Svg className="size-4">{camera}</Svg><span className="ml-1">Cameras</span></Row>
            <Row i={3}><Expander sign="-" last label="Model History" /><Svg className="size-4">{folder}</Svg><span className="ml-1">Model History</span></Row>
            {FEATURES.map(([name, kind], n) => {
              const faint = kind === "plane" || kind === "axis" || kind === "sketch";
              const last = n === FEATURES.length - 1;
              return (
                <Row key={name} i={n} done>
                  <label className="flex h-[19px] items-center">
                    <span className="mr-1 ml-[33px] flex h-[19px] w-[11px] flex-col">
                      <span className="h-[11px] border-b border-l border-dotted border-black" />
                      <span className={`-mb-px flex-1 border-l border-dotted ${last ? "border-transparent" : "border-black"}`} />
                    </span>
                    <span className="relative size-3 shrink-0">
                      <input type="checkbox" defaultChecked className="block size-3 appearance-none border border-black bg-white" />
                      <svg viewBox="0 0 24 24" className="pointer-events-none absolute inset-0 size-3" aria-hidden="true">{check}</svg>
                    </span>
                    <Svg className="mr-[5px] ml-[3px] size-[14px]">{TREE_ICONS[kind]}</Svg>
                    <span className={last ? "text-[13px] font-bold" : faint ? "text-[#9b9b9b]" : ""}>{name}</span>
                  </label>
                </Row>
              );
            })}
          </tbody>
        </table>
      </div>
      <div className="flex h-[15px] shrink-0 items-stretch border-t-2 border-[#777] bg-[#ababab]">
        <button type="button" aria-label="Scroll left" className="w-[15px]"><svg viewBox="0 0 12 12" className="size-3" aria-hidden="true"><path d="M11 1V11L1 6Z" fill="#ddd" stroke="#777" /></svg></button>
        <span className="w-[163px] border border-t-white border-r-[#666] border-b-[#666] border-l-white bg-[#ccc]" />
        <span className="flex-1" />
        <button type="button" aria-label="Scroll right" className="w-[14px]"><svg viewBox="0 0 12 12" className="size-3" aria-hidden="true"><path d="M1 1V11L11 6Z" fill="#ddd" stroke="#777" /></svg></button>
      </div>
      <button type="button" aria-label="Resize panels" className="mx-auto mt-px flex h-1.5 w-[38px] shrink-0 items-center justify-around bg-black">
        {[0, 1, 2].map((n) => <svg key={n} viewBox="0 0 7 4" className="h-1 w-[7px]" aria-hidden="true"><path d="M0 0H7L3.500 4Z" fill="#888" /></svg>)}
      </button>
      <div className="mr-0.5 mb-1 flex shrink-0 flex-col gap-1 border-2 border-t-[#777] border-r-[#e4e4e4] border-b-[#e4e4e4] border-l-[#777] p-1 pb-[5px]">
        {["Dependencies", "Details", "Preview"].map((t) => (
          <button key={t} type="button" className="h-[22px] border-2 border-black pl-3 text-left font-bold">{t}</button>
        ))}
      </div>
    </section>
  );
}

const NAV_TABS: [string, Node, string?][] = [
  ["Assembly Navigator", <><Cube k="yellow" x={0} y={0} s={0.4} /><Cube k="yellow" x={3} y={3} s={0.5} /><L d="M6 16V24M6 19H13M14 12H24" c="#1a1a80" w={1.4} /><Cube k="yellow" x={12} y={13} s={0.45} /></>],
  ["Constraint Navigator", mirror],
  ["Reuse Library", <><path d="M1 6 6 2H10V22H1Z" fill="#f08830" stroke="#8a4408" /><path d="M8 6 12 2H16V22H8Z" fill="#3cb050" stroke="#146a24" /><path d="M15 6 19 2H24V22H15Z" fill="#3a90d0" stroke="#14508a" /><L d="M1 6H6M8 6H13M15 6H21M5 6V22M12 6V22M20 6V22" c="#f4f4f4" w={0.8} /></>],
  ["HD3D Tools", <><circle cx="9" cy="15" r="8.500" fill="#2c7cd8" stroke="#1450a0" /><path d="M8 13.500H10V19M7 19.500H13M8.500 9.500H10.500" stroke="#fff" strokeWidth="2.200" /><L d="M11 4C17 4 20 8 20 13M13 0C20 0 24 5 24 11" c="#2858a8" w={2.2} /></>, "mt-3"],
  ["Web Browser", <><path d="M3 1H16L22 7V23H3Z" fill="#eef4fc" stroke="#4a6ea8" /><circle cx="13" cy="15" r="6" fill="#3f8ad0" stroke="#1f5a98" /><path d="M9 12 13 10 15 14 12 18Z" fill="#50b050" /></>, "mt-3"],
  ["Help", <><path d="M2 2H22V18H18L19 24 12 18H2Z" fill="#fdf8b0" stroke="#3a6a8a" strokeWidth="1.300" /><path d="M8.500 8C8.500 3.500 15.500 3.500 15.500 7.500 15.500 10 12 10 12 12.500M12 14.500V17" stroke="#12128a" strokeWidth="2.400" /></>],
  ["Part Navigator", clock, "mt-3"],
  ["Roles", <><path d="M1 4 8 2V20L1 23Z" fill="#e4e4e4" stroke="#555" /><path d="M8 3H24V19H8Z" fill="#f8f8f0" stroke="#555" /><Dots at={[[12, 6]]} c="#2a50d0" r={2} /><Dots at={[[12, 11]]} c="#d02020" r={2} /><Dots at={[[12, 16]]} c="#20a040" r={2} /><L d="M16 6H22M16 11H22M16 16H22" c="#777" /></>],
  ["Process Studio", <><rect x="1" y="1" width="9" height="5" fill="#e83020" /><rect x="1" y="5" width="9" height="5" fill="#ff9820" /><rect x="1" y="8" width="9" height="5" fill="#ffe820" /><rect x="1" y="12" width="9" height="5" fill="#30c040" /><rect x="1" y="17" width="9" height="6" fill="#2050e0" /><L d="M13 8 22 21" c="#111" w={3} /><Dots at={[[12, 7]]} c="#fff" r={2.4} /></>],
  ["Manufacturing Wizards", <><path d="M2 3 8 1V21L2 23Z" fill="#4a90c8" stroke="#1f5a8a" /><path d="M8 6H24V11H8Z" fill="#80b0dc" stroke="#1f5a8a" /><path d="M1 18H14V23H1Z" fill="#3a78b0" /><L d="M13 8 22 20" c="#111" w={2.6} /></>],
  ["Social", <><circle cx="17" cy="5" r="4.500" fill="#e8b070" stroke="#9a6020" /><path d="M10 16C10 8 24 8 24 16Z" fill="#2f9a40" /><circle cx="7" cy="12" r="4.500" fill="#b88878" stroke="#5a3020" /><path d="M0 24C0 15 14 15 14 24Z" fill="#9468c8" /></>],
  ["System Scenes", <><path d="M1 4 8 2V20L1 23Z" fill="#e4e4e4" stroke="#555" /><path d="M8 3H24V19H8Z" fill="#fff" stroke="#555" /><rect x="10" y="5" width="13" height="11" fill="#3050d8" /><path d="M10 5H14V16H10ZM19 5H23V16H19Z" fill="#e03020" /><path d="M14 16 16.500 9 19 16Z" fill="#fff" /></>],
];

function Part() {
  const e = { fill: "none", stroke: "#333b33", strokeWidth: 1.3, vectorEffect: "non-scaling-stroke" as const };
  return (
    <svg viewBox="0 0 1595 763" className="absolute inset-0 h-full w-full" role="img" aria-label="Green tee fitting with mounting plate">
      <defs>
        <linearGradient id="tubeR" gradientUnits="userSpaceOnUse" x1="1190" y1="430" x2="1370" y2="850">
          <stop offset="0" stopColor="#2f7a34" /><stop offset=".2" stopColor="#438b47" /><stop offset=".4" stopColor="#559c58" /><stop offset=".55" stopColor="#3a7c3e" /><stop offset=".78" stopColor="#265729" /><stop offset="1" stopColor="#122a13" />
        </linearGradient>
        <linearGradient id="tubeL" gradientUnits="userSpaceOnUse" x1="430" y1="880" x2="525" y2="1110">
          <stop offset="0" stopColor="#2f7634" /><stop offset=".2" stopColor="#428c46" /><stop offset=".42" stopColor="#57a05a" /><stop offset=".6" stopColor="#3c803f" /><stop offset=".82" stopColor="#26592a" /><stop offset="1" stopColor="#14301a" />
        </linearGradient>
        <linearGradient id="body" gradientUnits="userSpaceOnUse" x1="700" y1="720" x2="830" y2="1060">
          <stop offset="0" stopColor="#2f7634" /><stop offset=".3" stopColor="#3d8341" /><stop offset=".5" stopColor="#35743a" /><stop offset=".8" stopColor="#225025" /><stop offset="1" stopColor="#122a14" />
        </linearGradient>
        <linearGradient id="nose" gradientUnits="userSpaceOnUse" x1="210" y1="950" x2="300" y2="1240">
          <stop offset="0" stopColor="#2a6c2f" /><stop offset=".25" stopColor="#3f8a43" /><stop offset=".4" stopColor="#8cc98e" /><stop offset=".55" stopColor="#3f8443" /><stop offset=".8" stopColor="#1f4a22" /><stop offset="1" stopColor="#12280f" />
        </linearGradient>
        <linearGradient id="bore" x1="0" y1="0" x2=".3" y2="1"><stop offset="0" stopColor="#285a2a" /><stop offset=".45" stopColor="#4d9150" /><stop offset=".6" stopColor="#5ba45e" /><stop offset="1" stopColor="#3f8a43" /></linearGradient>
        <linearGradient id="vert" x1="0" x2="1"><stop offset="0" stopColor="#255c29" /><stop offset=".15" stopColor="#1f4721" /><stop offset=".38" stopColor="#1a3318" /><stop offset=".7" stopColor="#1f4320" /><stop offset="1" stopColor="#2a5d2d" /></linearGradient>
        <linearGradient id="cone" x1="0" x2="1"><stop offset="0" stopColor="#347a38" /><stop offset=".22" stopColor="#2a6a2e" /><stop offset=".38" stopColor="#4d8e4f" /><stop offset=".6" stopColor="#569257" /><stop offset=".75" stopColor="#3f7a41" /><stop offset="1" stopColor="#2a622d" /></linearGradient>
        <linearGradient id="rim" x1="0" x2="1"><stop offset="0" stopColor="#2f7433" /><stop offset=".2" stopColor="#5fae62" /><stop offset=".3" stopColor="#86cc88" /><stop offset=".42" stopColor="#438a46" /><stop offset=".6" stopColor="#6dbb6f" /><stop offset=".68" stopColor="#b8f2b8" /><stop offset=".8" stopColor="#5aa55c" /><stop offset="1" stopColor="#28602b" /></linearGradient>
        <linearGradient id="mouth" x1="0" x2="1"><stop offset="0" stopColor="#2a5a2c" /><stop offset=".45" stopColor="#1b3a1c" /><stop offset="1" stopColor="#3f7f41" /></linearGradient>
        <linearGradient id="web" gradientUnits="userSpaceOnUse" x1="1000" y1="1070" x2="1080" y2="1030"><stop offset="0" stopColor="#1f4421" /><stop offset=".55" stopColor="#35783a" /><stop offset="1" stopColor="#a8dca8" /></linearGradient>
        <linearGradient id="side" x1="0" y1="0" x2="0" y2="1"><stop offset="0" stopColor="#4a9350" /><stop offset=".6" stopColor="#2d6430" /><stop offset="1" stopColor="#14301a" /></linearGradient>
        <filter id="soft" x="-50%" y="-50%" width="200%" height="200%"><feGaussianBlur stdDeviation="12" /></filter>
      </defs>
      <g transform="translate(395 50) scale(.35714 .33333)">
        <path d="M1050 500 1108 478 1225 425C1250 412 1290 420 1310 418 1345 418 1385 440 1400 460L1440 475C1480 500 1503 560 1500 610 1498 640 1490 650 1484 670 1480 730 1460 760 1435 778L1420 800 1390 822 1250 885C1220 898 1180 890 1155 878L1085 904 1030 800Z" fill="url(#tubeR)" stroke="#233a24" strokeWidth="2" />
        <path d="M1400 460 1440 475C1480 500 1503 560 1500 610L1484 670C1480 600 1450 510 1400 460Z" fill="#245c29" opacity=".55" />
        <path d="M1060 545C1170 545 1235 680 1222 790 1215 840 1190 865 1165 878L1255 882C1285 850 1300 810 1303 740 1310 640 1230 480 1110 482Z" fill="#1d4a20" opacity=".35" />
        <ellipse cx="1205" cy="630" rx="16" ry="55" transform="rotate(-25 1205 630)" fill="#a5dca6" opacity=".8" filter="url(#soft)" />
        <ellipse cx="1190" cy="530" rx="40" ry="14" transform="rotate(35 1190 530)" fill="#8cc88e" opacity=".6" filter="url(#soft)" />
        <path {...e} d="M1060 545C1170 545 1235 680 1222 790 1215 840 1190 865 1165 878M1070 518C1200 510 1280 660 1268 760 1262 820 1230 865 1190 872M1110 482C1230 480 1310 640 1303 740 1300 810 1280 850 1255 880M1310 418C1400 440 1490 590 1477 690L1472 725" />
        <path {...e} strokeWidth="2" d="M1285 420C1370 450 1460 600 1445 740L1440 772" />

        <path d="M1000 800 1045 815 1085 905 1220 1155 1228 1195 1375 1435C1410 1510 1410 1600 1395 1645 1385 1680 1350 1700 1320 1703L1250 1720 1300 1465Z" fill="#2c6330" stroke="#2c332c" strokeWidth="3" />
        <path d="M1310 1465 1358 1440C1400 1500 1405 1600 1390 1645 1380 1680 1350 1700 1310 1704 1350 1640 1350 1540 1310 1465Z" fill="url(#side)" stroke="#333" strokeWidth="3" />
        <path d="M728 1030V1520C735 1640 800 1760 885 1760L1020 1750 1270 1718C1330 1700 1345 1620 1338 1560 1330 1500 1315 1475 1305 1460L1170 1225 960 900 780 1000Z" fill="#1e391d" stroke="#3d443d" strokeWidth="3" />
        <path {...e} d="M1310 1465C1360 1540 1360 1680 1300 1708" />
        <path d="M775 1040 1100 1182 1175 1235 1085 1194Z" fill="#152714" stroke="#3a403a" strokeWidth="3" />

        <g stroke="#3a403a" strokeWidth="4">
          <ellipse cx="851" cy="1582" rx="46" ry="78" transform="rotate(-12 851 1582)" fill="url(#bore)" />
          <ellipse cx="1220" cy="1543" rx="46" ry="78" transform="rotate(-12 1220 1543)" fill="url(#bore)" />
        </g>
        <path d="M862 1525C890 1540 905 1590 900 1615 880 1610 862 1570 862 1525ZM1233 1487C1262 1505 1272 1545 1268 1575 1250 1570 1233 1530 1233 1487Z" fill="#ececec" stroke="#333" strokeWidth="2" />

        <path d="M592 805C600 750 650 730 690 715L735 680H1050L1060 860 955 950C930 1020 890 1044 850 1045L790 1036C740 1062 700 1050 680 1035Z" fill="url(#body)" />
        <path d="M592 805C600 755 640 733 668 728 745 730 820 860 810 950 808 1000 795 1035 770 1050 730 1058 700 1050 680 1035Z" fill="#1a431d" opacity=".45" />
        <ellipse cx="735" cy="860" rx="18" ry="60" transform="rotate(-22 735 860)" fill="#8fd092" opacity=".8" filter="url(#soft)" />
        <ellipse cx="700" cy="780" rx="35" ry="16" transform="rotate(35 700 780)" fill="#5fa862" opacity=".8" filter="url(#soft)" />
        <path d="M255 962 600 805C670 760 745 880 740 960 740 1000 720 1020 690 1030L340 1187Z" fill="url(#tubeL)" />
        <path {...e} d="M630 793C700 800 745 900 738 970 735 1005 715 1020 695 1027M665 728C740 730 820 860 810 950 808 1000 790 1035 770 1050M592 805C600 760 640 735 665 728" />
        <path d="M860 1030C910 1020 940 980 955 940L930 935C900 950 890 1000 850 1015Z" fill="#16301a" />

        <path d="M925 840 972 848 1310 1465 1170 1218 1095 1175 955 945Z" fill="url(#web)" />
        <path d="M972 848C985 835 1005 825 1025 828L1358 1440 1310 1465Z" fill="#5ba05d" stroke="#222b22" strokeWidth="4" />
        <path d="M1025 828 1062 850 1085 905 1110 985 1358 1440Z" fill="#245027" />
        <path d="M970 862C1035 985 1100 1110 1170 1225L1305 1462" fill="none" stroke="#d6f7d4" strokeWidth="6" opacity=".85" />
        <path {...e} d="M925 835C900 890 900 950 870 995L835 1015M925 835C945 860 945 900 955 945 930 1020 890 1044 850 1045L790 1036M955 945 1095 1180M1045 830 1372 1440" />

        <path d="M118 1013 150 980C180 950 220 948 250 955 310 990 360 1060 355 1130L345 1187C320 1240 290 1245 265 1247L185 1253Z" fill="url(#nose)" stroke="#26382a" strokeWidth="3" />
        <path {...e} d="M195 953C290 960 345 1090 325 1190L310 1225M275 970C320 995 362 1080 350 1160" />
        <ellipse cx="158" cy="1133" rx="76" ry="122" transform="rotate(-17 158 1133)" fill="#1e3d1f" stroke="#3a413a" strokeWidth="7" />
        <ellipse cx="153" cy="1135" rx="45" ry="73" transform="rotate(-14 153 1135)" fill="url(#bore)" stroke="#444c44" strokeWidth="3" />

        <path d="M736 500 722 690C750 730 830 785 870 812 920 850 1000 840 1045 770L1052 540Z" fill="url(#vert)" />
        <path d="M722 690C715 700 705 708 697 712L862 814C840 770 790 720 722 690Z" fill="#3d8442" />
        <ellipse cx="775" cy="735" rx="40" ry="12" transform="rotate(25 775 735)" fill="#a0d8a2" opacity=".85" filter="url(#soft)" />
        <path d="M870 815C920 850 1000 845 1040 775L1022 785C990 810 930 825 870 815Z" fill="#4f9c52" />
        <path {...e} d="M697 712 860 812C900 840 930 855 960 850 1010 845 1040 800 1050 770 1070 720 1065 660 1045 628M970 850V805M1005 790 1025 832M1030 780C1050 800 1065 830 1062 860" />
        <path {...e} d="M745 515C800 620 1000 610 1052 540" />
        <path d="M742 200 716 240 708 400C697 415 697 430 700 445 708 470 722 490 740 505 800 555 900 572 960 568 1020 560 1080 520 1107 480L1122 285C1118 250 1105 235 1105 235Z" fill="url(#vert)" />
        <path {...e} strokeWidth="2" d="M740 505C800 555 900 572 960 568 1020 560 1080 520 1107 480" />
        <path d="M740 205C720 225 718 240 720 255 745 335 860 382 960 380 1050 375 1115 330 1121 285 1118 260 1108 240 1105 235Z" fill="url(#rim)" stroke="#333b33" strokeWidth="3" />
        <path d="M742 195 738 238C765 310 860 352 960 350 1040 345 1095 305 1103 262L1106 220Z" fill="#1c3a1b" stroke="#2e3a2e" strokeWidth="3" />
        <path d="M838 92 785 135C750 155 742 180 742 205 770 275 860 310 930 308 1030 305 1100 275 1106 222 1105 190 1080 170 1075 160L1028 100Z" fill="url(#cone)" stroke="#2e3a2e" strokeWidth="3" />
        <ellipse cx="933" cy="106" rx="95" ry="52" fill="#4c984e" stroke="#333b33" strokeWidth="6" />
        <ellipse cx="934" cy="103" rx="74" ry="43" fill="url(#mouth)" stroke="#333b33" strokeWidth="4" />

        <path d="M825 657 846 690 865 806 835 720Z" fill="#a8d8a8" stroke="#78a878" />
        <path d="M921 771H975M940 795H970" stroke="#1c38b0" strokeWidth="4" />
        <path d="M875 815 930 803 970 806 965 818 920 820Z" fill="#4d72d0" />
        <path d="M875 815 945 771 983 766 955 789Z" fill="#e8a0b4" stroke="#d890a0" />
      </g>
      <g fontFamily="Liberation Sans, sans-serif" fontSize="12">
        <text x="694" y="267" fill="#3fa048">YC</text>
        <text x="727" y="301" fill="#c8402c">XC</text>
        <g fontSize="9"><text x="45" y="658" fill="#9a9a9a">Y</text><text x="93" y="690" fill="#c87a70">X</text><text x="89" y="701" fill="#7088e0">Z</text></g>
      </g>
      <g fill="none" strokeWidth="1">
        <path d="M57 677 74 669 90 668 95 689 78 697 61 698Z" fill="#dcdcdc" stroke="#a080a0" />
        <path d="M57 677 72 674 90 668M72 674 78 697M74 669 79 693 95 689" stroke="#a080a0" />
        <path d="M61 698 95 688" stroke="#e0a0a0" strokeWidth="2" />
        <path d="M61 698 53 668" stroke="#2e8030" strokeWidth="3" /><path d="M50 660 57 669 49 671Z" fill="#2e8030" />
        <path d="M61 699 82 698" stroke="#1838c8" strokeWidth="3" /><path d="M80 694 89 697 80 701Z" fill="#1838c8" />
        <circle cx="61" cy="699" r="4" fill="#b4b4b4" />
      </g>
    </svg>
  );
}

function Combo({ value, className, label }: { value: string; className: string; label: string }) {
  return (
    <span className={`relative flex h-4 items-center self-center bg-white ${className}`}>
      <select aria-label={label} className="h-4 w-full appearance-none border-0 bg-transparent pl-[3px] outline-none"><option>{value}</option></select>
      <span className="pointer-events-none absolute inset-y-0 right-0 flex w-[14px] items-center justify-center border-2 border-white bg-[#d4d4d4]"><Caret /></span>
    </span>
  );
}

export default function App() {
  return (
    <div className="flex h-screen min-h-[1000px] flex-col overflow-hidden bg-[#ccc] font-['Liberation_Sans',Arial,sans-serif] text-xs text-black">
      <header className="flex h-5 shrink-0 items-center bg-[#d5d1ce] px-[3px]">
        <div className="flex flex-1 items-center gap-2"><Logo /><RoundButton label="Window menu" dim /></div>
        <h1 className="font-['DejaVu_Sans_Condensed','DejaVu_Sans',sans-serif] text-[11px] text-[#333]">NX 9 - Modeling</h1>
        <div className="flex flex-1 justify-end gap-2"><RoundButton label="Minimize" d={DOWN} /><RoundButton label="Maximize" d="M5 2 8 5 5 8 2 5Z" /><RoundButton label="Close" d={CLOSE} /></div>
      </header>

      <nav className="flex h-[30px] shrink-0 items-center border-t border-b border-t-white border-b-[#aaa]">
        <span className="mr-[7px] ml-1 h-5 w-px bg-white" />
        <div className="flex gap-4">
          {MENUS.map(([t, at]) => <button key={t} type="button"><Mnemonic text={t} at={at} /></button>)}
        </div>
      </nav>

      <div className="flex shrink-0">
        <Group>
          <button type="button" className="flex items-center gap-1 pl-[3px]">
            <Svg className="size-[23px]">
              <circle cx="12" cy="13" r="9.500" fill="#2a7fd8" /><path d="M5 8C9 12 8 18 12 22 6 22 2 18 3 12Z" fill="#48b838" /><path d="M15 8 21 11 17 17Z" fill="#48b838" />
              <path d="M2 18C8 20 20 12 22 4 26 10 16 22 4 21Z" fill="#ffe24a" stroke="#b88c10" strokeWidth=".6" /><path d="M2 3 13 1 9 14Z" fill="#d82020" stroke="#801010" strokeWidth=".6" />
            </Svg>
            Start
          </button>
          <button type="button" aria-label="Start options" className="ml-[5px] flex w-[9px] items-center justify-center"><Caret /></button>
          <Tools items={["New", "Open", "Save", "|", "Cut", "Copy", "Paste", "|", "Undo", "v", "Redo", "|", "Feature Clipboard", "v", "|", "Object Information", "|"]} />
          <input type="text" aria-label="Find a command" className="mr-1 ml-[5px] h-4 w-[132px] self-center border-0 bg-white px-1 outline-none" />
          <Tools items={["Command Finder"]} />
        </Group>
        <Group>
          <Tools items={["Fit", "v", "Edit Section", "v", "Shaded", "v", "Face Analysis", "Clip Section", "v", "Background", "v", "|", "Show and Hide", "Immediate Hide"]} />
        </Group>
        <Group>
          <Tools items={["Layer Settings", "WCS Orient", "v", "|", "Feature Properties", "Edit Display", "|", "Assign Feature", "v", "|", "Simple Distance", "v", "Measure Distance"]} />
        </Group>
      </div>

      <div className="flex shrink-0">
        <Group>
          <Tools items={["Sketch", "v", "Extrude", "Revolve", "Hole", "Emboss", "Rib", "Shell", "|", "Thicken", "Pattern Feature", "Pattern Geometry", "Mirror Feature", "Unite", "v", "Trim Body", "Split Body", "Offset Region", "Trim Sheet", "Delete Body", "Scale Body", "|", "Edge Blend", "Face Blend", "Soft Blend", "Chamfer", "Draft", "Facet Body"]} />
        </Group>
        <Group>
          <Tools items={["Move Face", "v", "Pull Face", "v", "Delete Face", "Copy Face", "v", "Group Face", "v", "Linear Dimension", "v", "Make Coplanar", "Offset Face", "Resize Face", "v"]} />
        </Group>
        <Group>
          <Tools items={["Ruled", "Through Curves", "Curve Mesh", "Swept", "Section Surface", "Offset Surface", "Sheets to Solid", "v"]} />
        </Group>
      </div>

      <div role="toolbar" className="flex h-8 shrink-0 border-b border-white/80 pl-2">
        <Combo label="Selection filter" value="No Selection Filter" className="mr-2.5 w-[155px]" />
        <Combo label="Selection scope" value="Entire Assembly" className="mr-1.5 w-[164px]" />
        <Tools small items={["Reset Filter", "|", "Allow Highlight", "Type Filter", "v", "Up One Level", "Deselect All", "|", "Rectangle", "v", "|", "Highlight Faces", "Highlight Hidden", "|", "*Snap Points", "Clear Snap", "*End Point", "*Mid Point", "Control Point", "Intersection", "*Arc Center", "Quadrant Point", "*Existing Point", "*Point on Curve", "Point on Face", "|", "Bounded Grid"]} />
        <button type="button" aria-label="Toolbar options" className="mr-[7px] ml-auto flex items-end pb-1.5"><Caret /></button>
      </div>

      <div className="flex h-[27px] shrink-0 bg-linear-to-b from-[#ccc] to-[#b4b4b4] pt-1 pr-1.5 pb-px pl-1">
        <span className="flex-[921] border border-[#aaa] border-r-white" />
        <span className="flex-[920] border border-l-0 border-[#aaa] border-r-white" />
        <span className="w-[23px] border border-l-0 border-[#aaa] border-r-white" />
        <span className="flex w-[22px] items-center justify-center border-t border-b border-[#aaa]"><span className="size-[14px] rounded-full border border-[#35601c] bg-[#8ed04c] outline outline-white" /></span>
        <span className="ml-0.5 flex w-5 items-center justify-center"><Svg className="size-4">{flag}</Svg></span>
      </div>

      <main className="flex min-h-0 flex-1 bg-linear-to-b from-[#858585] via-[#979797] via-5% to-[#8c8c8c]">
        <aside className="flex w-[30px] shrink-0 flex-col overflow-hidden">
          <button type="button" aria-label="Pin" className="flex h-[27px] items-center justify-center pl-1.5"><Svg className="size-[10px]"><path d="M9 3 22 2 20 14 9 16Z" fill="#d8d070" stroke="#111" strokeWidth="3" /><circle cx="8" cy="12" r="6" fill="#eee890" stroke="#111" strokeWidth="3" /><L d="M5 18 1 24" w={3} /></Svg></button>
          {NAV_TABS.map(([name, icon, extra]) => (
            <button key={name} type="button" title={name} aria-label={name} className={`mb-0.5 ml-0.5 flex h-[35px] shrink-0 items-center rounded-l-lg border border-r-0 border-[#e6e6e6] border-b-[#777] pl-1 ${extra ?? ""} ${name === "Part Navigator" ? "bg-[#fafafa]" : "bg-[#bdbdbd]"}`}>
              <Svg className="size-[22px]">{icon}</Svg>
            </button>
          ))}
        </aside>
        <div className="flex min-w-0 flex-1 gap-3.5 pt-px pb-[7px]">
          <Navigator />
          <section className="flex min-w-0 flex-1 flex-col rounded-tl-md border-l-2 border-[#d5d2cf] bg-[#ccc] shadow-[0_0_5px_2px_#333]">
            <header className="flex h-6 shrink-0 items-center rounded-tl-md border-t border-white bg-[#d5d1ce] pr-1.5 pl-1">
              <div className="flex flex-1 items-center gap-2"><Logo /><RoundButton label="Menu" dim /></div>
              <h2 className="font-['DejaVu_Sans_Condensed','DejaVu_Sans',sans-serif] text-[11px] text-[#8f8c89]">test3.prt</h2>
              <div className="flex flex-1 justify-end gap-2"><RoundButton label="Minimize" d={DOWN} dim /><RoundButton label="Maximize" d={UP} dim /></div>
            </header>
            <div className="relative min-h-0 flex-1 bg-linear-to-b from-[#97bfdf] via-[#c9d6e1] via-50% to-[#e5e5e5] to-75%"><Part /></div>
            <div className="h-[25px] shrink-0 border-b-4 border-[#d5d2cf]" />
          </section>
        </div>
      </main>

      <footer className="flex h-10 shrink-0 border-t border-b-2 border-t-[#d8d8d8] border-b-[#9a9a9a] bg-linear-to-b from-[#adadad] via-[#bdbdbd] via-40% to-[#cbcbcb]">
        <Group className="h-[37px] border-t-0 border-b-0">
          <Tools items={["Find Component", "v", "Work Part", "Displayed Part", "Add Component", "v", "Move Component", "Mirror Assembly", "Assembly Constraints", "|", "Suppress Component", "Exploded Views", "Sequence", "|", "Product Interface", "|", "WAVE Linker", "WAVE Browser", "Assembly Info", "|", "Check Clearances", "v"]} />
        </Group>
        <Group className="h-[37px] border-t-0 border-b-0">
          <Tools items={["Sketch in Task"]} />
          <button type="button" className="mr-2 flex items-center gap-[5px] pl-[3px] text-[#777] [text-shadow:1px_1px_0_#ddd]">
            <Svg>{ICONS["Finish Flag"]}</Svg>
            <span><Mnemonic text="Finish Sketch" at={8} /></span>
          </button>
          <Tools items={["Profile", "Line", "Arc", "Circle", "Fillet", "Sketch Chamfer", "Sketch Rectangle", "Studio Spline", "Point", "Offset Curve", "v", "|", "Quick Trim", "Quick Extend", "Make Corner", "|", "Rapid Dimension", "v", "|", "Geometric Constraints", "Make Symmetric", "*Display Constraints", "v", "|", "Auto Constrain", "Attach Dimension", "Convert Reference"]} />
        </Group>
      </footer>
    </div>
  );
}
